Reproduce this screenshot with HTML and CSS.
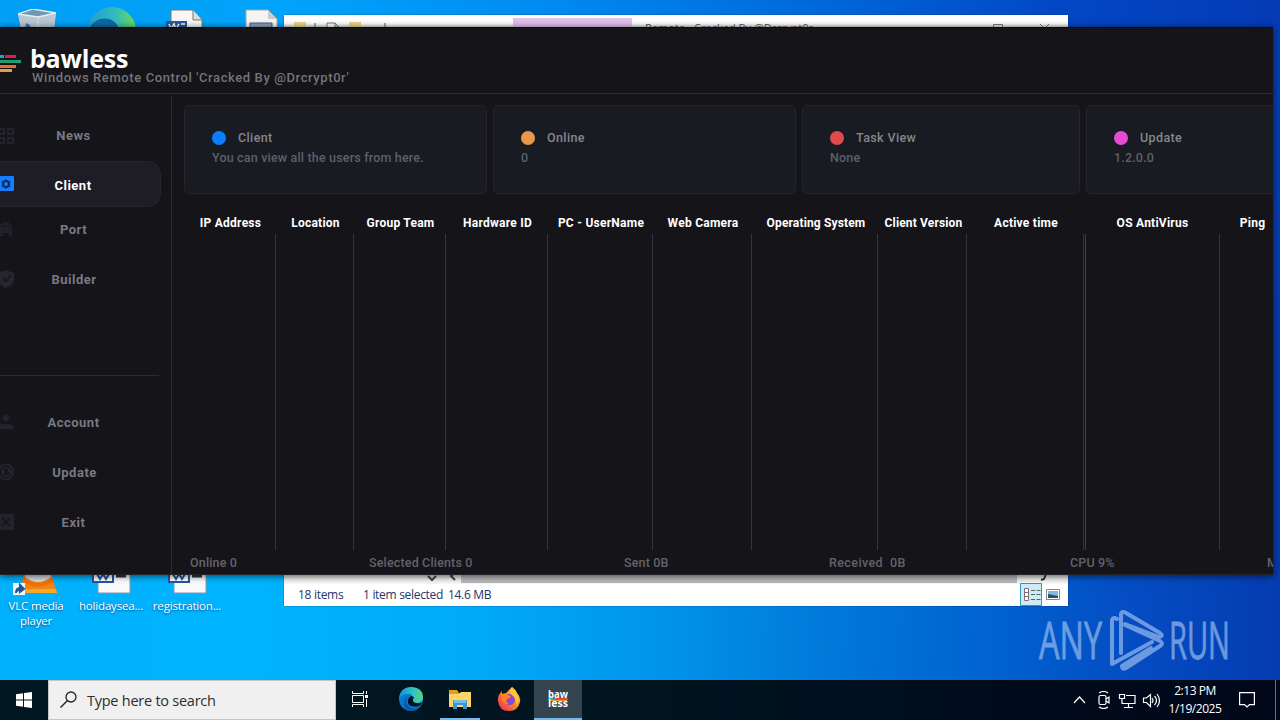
FILE: index.html
```html
<!DOCTYPE html>
<html lang="en">
<head>
<meta charset="utf-8">
<title>Desktop</title>
<link rel="stylesheet" href="styles.css">
</head>
<body>
<div class="desktop">
  <svg class="icon-art bin" viewBox="0 0 40 20" width="40" height="20"><path d="M0 5 15 0 38 4 36 20H3z" fill="#9fb4c4"/><path d="M0 5 20 8 38 4 36 20H3z" fill="#b9c8d2"/><path d="M0 5 15 0 38 4 20 8z" fill="#7397ae" stroke="#e4edf2" stroke-width="1.3"/><path d="M20 8v12" stroke="#d5e0e6"/><path d="M8 14l4 2v4H7z" fill="#3478af"/></svg>
  <svg class="icon-art edge-big" viewBox="0 0 48 22" width="48" height="22"><defs><linearGradient id="eg"><stop offset="0" stop-color="#249fce"/><stop offset=".55" stop-color="#31b9c1"/><stop offset="1" stop-color="#6bdc55"/></linearGradient></defs><circle cx="24" cy="24" r="24" fill="url(#eg)"/><path d="M0 23Q7 9 21 12q9 3 10 12z" fill="#0e69a8"/></svg>
  <svg class="icon-art doc-a" viewBox="0 0 38 20" width="38" height="20"><path d="M5 1h22l9 10v9H5z" fill="#f7f7f7" stroke="#777"/><path d="M27 1v10h9" fill="#ddd" stroke="#777"/><path d="M0 12h21v8H0z" fill="#2959a2"/><path d="m3 15 2 5 3-5 2 5 3-5M15 15h4" stroke="#fff" stroke-width="1.5" fill="none"/></svg>
  <svg class="icon-art doc-b" viewBox="0 0 34 20" width="34" height="20"><path d="M1 1h22l9 9v10H1z" fill="#f4f4f4" stroke="#aaa"/><path d="M23 1v9h9" fill="#ccc"/><path d="M5 14h22v6H5z" fill="#8a9eb5" stroke="#415b81"/></svg>

  <div class="shortcut vlc">
    <svg viewBox="0 0 46 30" width="46" height="30"><path d="M12 4h25l7 23H7z" fill="#ed8614"/><path d="M7 23h36l1 4H7z" fill="#f9a928"/><path d="M13 2h24l1 9q-13 10-26 0z" fill="#d9dadd"/><path d="M11 12q14 10 28 0l2 4q-16 9-31 0z" fill="#f26f0a"/><path d="M0 17h12v12H0z" fill="#f1f6fb"/><path d="M3 27q0-5 4-5v-3l4 4-4 3v-2" stroke="#21588f" stroke-width="2" fill="#21588f"/></svg>
    <span>VLC media<br>player</span>
  </div>
  <div class="shortcut holiday">
    <svg viewBox="0 0 46 30" width="46" height="30"><path d="M10 0h32v27H10z" fill="#fafafa" stroke="#8699ac"/><path d="M5 0h20v16H5z" fill="#fff" stroke="#2455a5" stroke-width="2"/><path d="m9 8 3 5 3-5 3 5 3-5" stroke="#2455a5" stroke-width="2" fill="none"/><path d="M28 10h10" stroke="#26354d" stroke-width="3"/></svg>
    <span>holidaysea...</span>
  </div>
  <div class="shortcut registration">
    <svg viewBox="0 0 46 30" width="46" height="30"><path d="M10 0h32v27H10z" fill="#fafafa" stroke="#8699ac"/><path d="M5 0h20v16H5z" fill="#fff" stroke="#2455a5" stroke-width="2"/><path d="m9 8 3 5 3-5 3 5 3-5" stroke="#2455a5" stroke-width="2" fill="none"/><path d="M28 10h10" stroke="#26354d" stroke-width="3"/></svg>
    <span>registration...</span>
  </div>

  <section class="explorer">
    <header class="explorer-title">
      <svg viewBox="0 0 120 20" width="120" height="20"><path d="M10 7h12v13H10zM65 7h12v13H65z" fill="#ead57f"/><path d="M31 8v12M101 8v12" stroke="#555"/><path d="M43 20V8h8l4 4v8M51 8v4h4" fill="#fff" stroke="#777"/></svg>
      <span class="manage"></span>
      <span class="explorer-name">Remote - Cracked By @Drcrypt0r</span>
      <svg class="caption" viewBox="0 0 60 12" width="60" height="12"><path d="M.5 10V.5h9V10M47 0l9 9M56 0l-9 9" fill="none" stroke="#777"/></svg>
    </header>
    <div class="scroll-row"><svg viewBox="0 0 785 12" width="785" height="12"><path d="M144 4l4 4 4-4M171 1l-4 3 4 4" fill="none" stroke="#444" stroke-width="2"/><path d="M177 0h556v11H177z" fill="#b9b9bb"/><path d="m762 2-2 5-3 1" fill="none" stroke="#333" stroke-width="2"/></svg></div>
    <footer class="explorer-status">
      <span class="count">18 items</span><span class="selected">1 item selected</span><span class="size">14.6 MB</span>
      <svg class="view-list" viewBox="0 0 22 23" width="22" height="23"><path d="M.5.5h21v22H.5z" fill="#ccebf7" stroke="#3197bd"/><path d="M4.500 5.500h4v12h-4zM4 9.500h5M4 13.500h5" fill="#fff" stroke="#876b74"/><path d="M11 7.500h4m1.500 0h4M11 11.500h4m1.500 0h4M11 16.500h4m1.500 0h4" stroke="#566"/></svg>
      <svg viewBox="0 0 14 11" width="14" height="11"><path d="M.5.5h13v10H.5z" fill="#fff" stroke="#8a8290"/><path d="M2 2h10v7H2z" fill="#84b6ea"/><path d="m2 5 5 1 5 1v2H2z" fill="#275361"/></svg>
    </footer>
  </section>

  <svg class="watermark" viewBox="0 0 194 64" width="194" height="64">
    <g class="mark-text"><text x="1" y="50" textLength="63" lengthAdjust="spacingAndGlyphs">ANY</text><text x="131" y="50" textLength="61" lengthAdjust="spacingAndGlyphs">RUN</text></g>
    <path d="M79 10q-5-3-5 3v42l40-22M83 44V6q0-5 5-2l34 20q4 3-1 4L87 15M87 16l35 16q4 3 0 5L88 59q-4 2-4-2l29-18" class="mark-line"/>
  </svg>

  <main class="app">
    <header class="brand">
      <svg viewBox="0 0 22 20" width="22" height="20"><g stroke-width="3"><path d="M0 3.500h4" stroke="#17a8dd"/><path d="M5 3.500h11" stroke="#e51651"/><path d="M0 8.500h21" stroke="#1d9d70"/><path d="M0 13.500h16" stroke="#ed6b24"/><path d="M0 17.500h12" stroke="#e2a13c"/></g></svg>
      <div><h1>bawless</h1><p>Windows Remote Control 'Cracked By @Drcrypt0r'</p></div>
    </header>
    <div class="app-body">
      <nav class="sidebar">
        <div class="nav-main">
          <a class="item"><svg viewBox="0 0 14 16" width="14" height="16"><path d="M-3 1h7v5h-7zM8 1h5v5H8zM-3 10h7v5h-7zM8 10h5v5H8z" fill="none" stroke="#24222b" stroke-width="2"/></svg><span>News</span></a>
          <a class="item active"><svg viewBox="0 0 14 16" width="14" height="16"><rect x="-5" width="19" height="15" rx="1" fill="#157dfe"/><circle cx="6" cy="8" r="3" fill="none" stroke="#0d2a61" stroke-width="2"/><path d="M6 3v2m0 6v2M1.500 5.500l2 1m5 3 2 1m0-5-2 1m-5 3-2 1" stroke="#0d2a61"/></svg><span>Client</span></a>
          <a class="item port"><svg viewBox="0 0 14 16" width="14" height="16"><path d="M0 3h3V1h6v2h2l1 6v6H9v-3H3v3H0z" fill="#222129"/><path d="M1 5h9M2 8h2m4 0h2" stroke="#15141a"/></svg><span>Port</span></a>
          <a class="item builder"><svg viewBox="0 0 15 18" width="15" height="18"><path d="M6 0l8 3v6q0 6-8 9-8-3-8-9V3z" fill="#262530"/><path d="m3 8 3 3 5-6" fill="none" stroke="#17161b" stroke-width="2"/></svg><span>Builder</span></a>
        </div>
        <div class="nav-foot">
          <a class="item"><svg viewBox="0 0 14 16" width="14" height="16"><path d="m6 0 4 4-4 4-4-4z" fill="#24232c"/><path d="M-3 15q0-5 9-5t8 5z" fill="#24232c"/></svg><span>Account</span></a>
          <a class="item"><svg viewBox="0 0 16 18" width="16" height="18"><circle cx="6" cy="9" r="7.500" fill="none" stroke="#24232d" stroke-width="2"/><path d="M2 9q0-4 4-4t5 4q-1 4-5 4T2 9m0-3v3h3m6 3V8H8" fill="none" stroke="#24232d" stroke-width="2"/></svg><span>Update</span></a>
          <a class="item"><svg viewBox="0 0 14 16" width="14" height="16"><rect x="-2" width="16" height="16" rx="2" fill="#24232c"/><path d="m2 4 8 8m0-8-8 8" stroke="#18171d" stroke-width="2"/></svg><span>Exit</span></a>
        </div>
      </nav>
      <section class="content">
        <div class="cards">
          <article class="card"><h2><i class="dot blue"></i>Client</h2><p>You can view all the users from here.</p></article>
          <article class="card"><h2><i class="dot orange"></i>Online</h2><p>0</p></article>
          <article class="card"><h2><i class="dot red"></i>Task View</h2><p>None</p></article>
          <article class="card"><h2><i class="dot pink"></i>Update</h2><p>1.2.0.0</p></article>
        </div>
        <div class="table">
          <div class="col"><b>IP Address</b></div><div class="col"><b>Location</b></div><div class="col"><b>Group Team</b></div><div class="col"><b>Hardware ID</b></div><div class="col"><b>PC - UserName</b></div><div class="col"><b>Web Camera</b></div><div class="col tight"><b>Operating System</b></div><div class="col tight"><b>Client Version</b></div><div class="col"><b>Active time</b></div><div class="col double"><b>OS AntiVirus</b></div><div class="col"><b>Ping</b></div>
        </div>
        <footer class="stats"><span>Online 0</span><span>Selected Clients 0</span><span>Sent 0B</span><span class="received">Received&nbsp; 0B</span><span>CPU 9%</span><span>M</span></footer>
      </section>
    </div>
  </main>

  <footer class="taskbar">
    <div class="start"><svg viewBox="0 0 16 16" width="16" height="16"><path d="M0 2.200 7 1.200V7.500H0zM8 1l8-1v7.500H8zM0 8.500h7v6.300l-7-1zM8 8.500h8V16l-8-1z" fill="#fff"/></svg></div>
    <div class="search"><svg viewBox="0 0 18 18" width="18" height="18"><circle cx="11" cy="6" r="5" fill="none" stroke="#222" stroke-width="1.300"/><path d="m7.500 9.500-7 7" stroke="#222" stroke-width="1.400"/></svg><span>Type here to search</span></div>
    <div class="task"><svg viewBox="0 0 17 16" width="17" height="16"><path d="M.5 0v2.500h11V0M.5 4.500h11v7H.5zM.5 16v-2.500h11V16M14.500 0v3m0 5v8" fill="none" stroke="#fff"/><path d="M13 4h3v3h-3z" fill="#fff"/></svg></div>
    <div class="task"><svg viewBox="0 0 24 24" width="24" height="24"><defs><linearGradient id="tg"><stop stop-color="#168fd6"/><stop offset=".6" stop-color="#32c5c2"/><stop offset="1" stop-color="#58d578"/></linearGradient></defs><circle cx="12" cy="12" r="12" fill="#0a78cc"/><path d="M0 12Q1 0 13 0q11 1 11 10 0 6-7 6-5 0-3-4 0-6-7-5-5 1-7 5" fill="url(#tg)"/><path d="M9 9Q4 16 12 21q4 2 9-2-4 5-11 5-5-1-5-7 0-5 4-8" fill="#1057a5"/><path d="M15 10q-3 5 2 6 4 1 6-1-1 3-3 4-9 2-11-3-1-4 3-7" fill="#001521"/></svg></div>
    <div class="task open"><svg viewBox="0 0 22 20" width="22" height="20"><path d="M0 1h8l2 3h12v4H0z" fill="#e69c1c"/><path d="M0 5h10l2-2h10v15H0z" fill="#ffd56a"/><path d="M4 12q0-1 1-1h12q1 0 1 1v8h-4v-4H8v4H4z" fill="#3d96d1"/><path d="M5 11h12v3H5z" fill="#75bde7"/></svg></div>
    <div class="task"><svg viewBox="0 0 24 24" width="24" height="24"><defs><linearGradient id="fg" x1="1" x2="0" y2="1"><stop stop-color="#ffe94a"/><stop offset=".45" stop-color="#ff8a20"/><stop offset="1" stop-color="#ee205f"/></linearGradient></defs><path d="M15 0q5 4 5 6 4 4 3 9-2 9-11 9Q2 24 1 14q-1-5 4-10v3l4-1Q12 3 15 0" fill="url(#fg)"/><circle cx="12.500" cy="12.500" r="5.500" fill="#824bd7"/><path d="M4 7q4-1 6 1l4 1q-1 3-4 3-2 3 2 5-6 1-8-6" fill="#ff8122"/><path d="M15 0q-4 6 1 9 5 5 2 10 6-5 2-12-1-4-5-7" fill="#ffc72f"/></svg></div>
    <div class="task current"><svg viewBox="0 0 20 18" width="20" height="18"><path d="M0 9h9" stroke="#39a0bb" stroke-width="2"/><path d="M8 9h12" stroke="#e84446" stroke-width="2"/><path d="M2 10.500h17" stroke="#e6a42f" stroke-width="1"/><g class="tile-text"><text x="0" y="8" textLength="20" lengthAdjust="spacingAndGlyphs">baw</text><text x="0" y="17" textLength="20" lengthAdjust="spacingAndGlyphs">less</text></g></svg></div>
    <div class="tray">
      <svg viewBox="0 0 88 18" width="88" height="18"><g fill="none" stroke="#fff" stroke-width="1.200"><path d="m1 12 5.500-6 5.500 6"/><rect x="26" y="4.500" width="7" height="9" rx="1.500"/><path d="m33 8 3-2v6l-3-2M26 2q5-3 9 0M26 16q5 3 9 0"/><path d="M53 4.500h9v8H49V9M46.500 3.500h5v4h-5zM49 7v3M55.500 13v3M51 16.500h9"/><path d="M70.500 7h3l4-3.500v12l-4-4h-3zM79 7q2 2.500 0 5M81.500 5q4 4.500 0 9M84 3q5 6.500 0 13"/></g></svg>
      <div class="clock">2:13 PM<br>1/19/2025</div>
      <svg class="note" viewBox="0 0 16 17" width="16" height="17"><path d="M.6.6h14.800v12H10.500L8 15l-2.500-2.400H.6z" fill="none" stroke="#fff" stroke-width="1.200"/></svg>
    </div>
  </footer>
</div>
</body>
</html>
```
FILE: styles.css
```css
* { box-sizing: border-box; }
body { margin: 0; overflow: hidden; font-family: "Open Sans", "Noto Sans", sans-serif; }
svg { display: block; flex: none; }
h1, h2, p { margin: 0; }
.desktop { position: relative; width: 1280px; height: 720px; overflow: hidden; background: linear-gradient(92deg, #00b0fc 0%, #00b4ff 20%, #00aaf9 38%, #0198ef 50%, #007bdc 64%, #0062cf 78%, #044dc3 88%, #053bb1 100%); }
.desktop::before { content: ""; position: absolute; inset: 0 0 auto; height: 27px; background: linear-gradient(100deg, #009ff5 0%, #00a4fa 22%, #008cf0 42%, #0064d8 66%, #0347c5 82%, #043bb5 100%); }
.icon-art { position: absolute; top: 9px; }
.bin { left: 18px; }
.edge-big { left: 88px; top: 7px; }
.doc-a { left: 166px; }
.doc-b { left: 245px; }
.shortcut { position: absolute; top: 566px; width: 80px; display: flex; flex-direction: column; align-items: center; color: #fff; font-size: 11.500px; line-height: 15px; letter-spacing: -.180px; text-align: center; text-shadow: 0 1px 2px #0059; white-space: nowrap; }
.shortcut span { margin-top: 2px; }
.vlc { left: -4px; }
.holiday { left: 71px; }
.registration { left: 147px; }

.explorer { position: absolute; left: 284px; top: 15px; width: 784px; height: 591px; background: #fff; display: flex; flex-direction: column; box-shadow: 0 0 1px #124; }
.explorer-title { display: flex; height: 20px; background: linear-gradient(#fff 45%, #bbb 70%); }
.manage { margin: 3px 0 0 109px; width: 119px; background: #e1c1ef; }
.explorer-name { margin: 5px 0 0 13px; width: 166px; font-size: 11px; white-space: nowrap; color: #555; }
.caption { margin: 9px 0 0 182px; }
.scroll-row { margin-top: auto; height: 12px; background: linear-gradient(#ddd, #f8f8f8); }
.explorer-status { display: flex; align-items: center; height: 20px; margin-bottom: 2px; padding: 0 8px 0 14px; font-size: 12px; letter-spacing: -.300px; color: #24366b; white-space: nowrap; }
.count { width: 65px; }
.selected { width: 85px; }
.view-list { margin: 0 4px 0 auto; }

.watermark { position: absolute; left: 1038px; top: 609px; opacity: .65; overflow: visible; }
.mark-text { font: 500 52px "Open Sans", sans-serif; fill: #a4c4f1; stroke: #a4c4f1; stroke-width: .8; }
.mark-line { fill: none; stroke: #a4c4f1; stroke-width: 4; stroke-linejoin: round; stroke-linecap: round; }

.app { position: absolute; left: 0; top: 27px; width: 1273px; height: 548px; overflow: hidden; display: flex; flex-direction: column; background: #151419; color: #85858d; font-family: Roboto, "Liberation Sans", sans-serif; box-shadow: 0 1px 7px #000a; }
.app::before { content: ""; position: absolute; inset: 0; border-top: 1px solid #0b0a0e; border-bottom: 1px solid #24222a; }
.brand { display: flex; height: 67px; flex: none; border-bottom: 1px solid #2d2c32; white-space: nowrap; }
.brand svg { margin-top: 26px; }
.brand h1 { margin: 16px 0 0 8px; font: 700 25px/31px "Open Sans", sans-serif; letter-spacing: -.200px; color: #fff; }
.brand p { margin: -4px 0 0 10px; font-size: 13px; line-height: 15px; font-weight: 500; letter-spacing: .600px; color: #74737b; }
.app-body { display: flex; flex: 1; min-height: 0; }
.sidebar { width: 172px; flex: none; margin-top: 2px; border-right: 1px solid #2d2c32; }
.item { display: flex; align-items: center; height: 50px; }
.item span { flex: 1; text-align: center; padding-right: 26px; font-size: 13px; font-weight: 700; letter-spacing: .520px; color: #777983; }
.nav-main { height: 280px; margin-right: 12px; border-bottom: 1px solid #2d2c32; padding-top: 14px; }
.nav-main .item:first-child { height: 51px; }
.nav-main .active { height: 46px; width: 161px; border: solid #252430; border-width: 1px 1px 1px 0; border-radius: 0 14px 14px 0; background: #1e1d25; }
.nav-main .active span { color: #fff; letter-spacing: .500px; padding: 2px 28px 0 0; }
.nav-main .port { height: 44px; }
.nav-main .builder { height: 56px; }
.nav-foot { margin-right: 12px; padding-top: 21px; }
.content { flex: none; width: 1120px; display: flex; flex-direction: column; }
.cards { display: grid; grid-template-columns: 303px 303px 278px 300px; gap: 6px; height: 89px; margin: 11px 0 0 12px; }
.card { border: 1px solid #25242b; border-radius: 5px; padding: 24px 0 0 27px; background: #191b22; box-shadow: inset 0 0 0 5px #1a1b21; }
.card h2 { display: flex; align-items: center; gap: 12px; font-size: 12.500px; line-height: 16px; font-weight: 500; letter-spacing: .380px; color: #85878c; }
.card p { margin-top: 5px; font-size: 12.500px; line-height: 14px; font-weight: 500; letter-spacing: .180px; color: #5d6067; }
.dot { width: 14px; height: 14px; border-radius: 50%; }
.blue { background: #087fff; }
.orange { background: #e9984b; }
.red { background: #e14a4c; }
.pink { background: #e64bd2; }
.table { display: grid; grid-template-columns: 92px 78px 92px 102px 105px 99px 126px 89px 117px 136px 64px; height: 336px; margin: 20px 0 0 12px; }
.col { display: flex; justify-content: center; padding: 0 0 0 1px; background: linear-gradient(#35343c, #35343c) right bottom / 1px 316px no-repeat; white-space: nowrap; font-size: 12px; line-height: 18px; color: #fff; letter-spacing: .250px; }
.col b { font-weight: 700; }
.tight { padding-left: 2px; letter-spacing: .150px; }
.double { background: linear-gradient(#35343c, #35343c) right bottom / 1px 316px no-repeat, linear-gradient(#29416b, #29416b) 1px bottom / 1px 316px no-repeat; }
.stats { display: grid; grid-template-columns: 179px 255px 205px 241px 197px 24px; margin: 5px 0 0 18px; font-size: 12.500px; line-height: 16px; font-weight: 500; letter-spacing: .160px; color: #63626a; }
.received { letter-spacing: .400px; }

.taskbar { position: absolute; left: 0; top: 680px; width: 1280px; height: 40px; display: flex; background: linear-gradient(90deg, #001721, #001520 50%, #000e1d 70%, #000719); }
.start { width: 48px; display: grid; place-items: center; }
.search { width: 288px; display: flex; align-items: center; gap: 9px; padding-left: 11px; background: #f0f0f0; border: 1px solid #c5c5c5; color: #2d2d2d; font-size: 14.500px; letter-spacing: -.250px; }
.task { width: 49px; display: grid; place-items: center; border-bottom: 2px solid transparent; }
.open { width: 40px; margin: 0 5px 0 5px; border-color: #76b9ed; }
.task:nth-child(4) { width: 48px; margin-left: 2px; }
.task:nth-child(6) { width: 48px; }
.current { width: 48px; margin-left: 1px; background: #33444e; border-color: #76b9ed; }
.tile-text { font: 700 10px "Open Sans", sans-serif; fill: #fff; }
.tray { display: flex; align-items: center; margin-left: auto; padding-right: 4px; border-right: 1px solid #63708a; margin-right: 4px; color: #fff; }
.tray > svg:first-child { margin-right: -1px; }
.clock { width: 68px; margin-left: 1px; text-align: center; font-size: 12px; line-height: 18px; letter-spacing: -.450px; }
.note { margin: 0 16px 0 10px; }
```
